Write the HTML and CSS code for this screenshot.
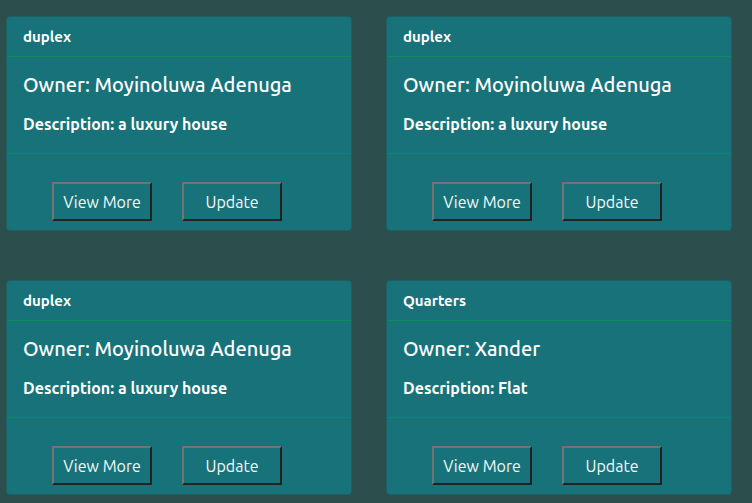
FILE: index.html
```html
<!DOCTYPE html>
<html>
<head>
<meta charset="utf-8">
<link rel="stylesheet" href="styles.css">
</head>
<body>
<div class="grid">
  <div class="card">
    <div class="card-header">duplex</div>
    <div class="card-body">
      <h2 class="owner">Owner: Moyinoluwa Adenuga</h2>
      <p class="desc">Description: a luxury house</p>
    </div>
    <div class="card-footer">
      <button class="btn">View More</button>
      <button class="btn">Update</button>
    </div>
  </div>
  <div class="card">
    <div class="card-header">duplex</div>
    <div class="card-body">
      <h2 class="owner">Owner: Moyinoluwa Adenuga</h2>
      <p class="desc">Description: a luxury house</p>
    </div>
    <div class="card-footer">
      <button class="btn">View More</button>
      <button class="btn">Update</button>
    </div>
  </div>
  <div class="card">
    <div class="card-header">duplex</div>
    <div class="card-body">
      <h2 class="owner">Owner: Moyinoluwa Adenuga</h2>
      <p class="desc">Description: a luxury house</p>
    </div>
    <div class="card-footer">
      <button class="btn">View More</button>
      <button class="btn">Update</button>
    </div>
  </div>
  <div class="card">
    <div class="card-header">Quarters</div>
    <div class="card-body">
      <h2 class="owner">Owner: Xander</h2>
      <p class="desc">Description: Flat</p>
    </div>
    <div class="card-footer">
      <button class="btn">View More</button>
      <button class="btn">Update</button>
    </div>
  </div>
</div>
</body>
</html>
```
FILE: styles.css
```css
html, body {
  margin: 0;
  padding: 0;
  background: #2c4f4e;
  font-family: "Ubuntu", "Open Sans", "Noto Sans", sans-serif;
  color: #ffffff;
}
.grid {
  display: grid;
  grid-template-columns: 346px 346px;
  column-gap: 34px;
  row-gap: 49px;
  padding: 16px 0 0 6px;
}
.card {
  background: #18727a;
  border: 1px solid #1f5e63;
  border-radius: 4px;
  height: 215px;
  box-sizing: border-box;
  display: flex;
  flex-direction: column;
}
.card-header {
  font-size: 15px;
  font-weight: 700;
  line-height: 21px;
  padding: 9px 16px;
  border-bottom: 1px solid #0b8a5a;
}
.card-body {
  flex: 0 0 auto;
  height: 96px;
  box-sizing: border-box;
  padding: 14px 16px 0;
}
.owner {
  margin: 0;
  font-size: 20px;
  font-weight: 500;
  line-height: 28px;
}
.desc {
  margin: 14px 0 0;
  font-size: 16px;
  font-weight: 700;
  line-height: 22px;
}
.card-footer {
  display: flex;
  gap: 30px;
  padding: 28px 0 0 45px;
  border-top: 1px solid #0b8a5a;
}
.btn {
  width: 100px;
  height: 39px;
  box-sizing: border-box;
  background: transparent;
  color: #f2fafa;
  font-family: inherit;
  font-size: 16px;
  border-style: solid;
  border-width: 2px;
  border-color: #737373 #222222 #222222 #737373;
  padding: 0;
}
```
